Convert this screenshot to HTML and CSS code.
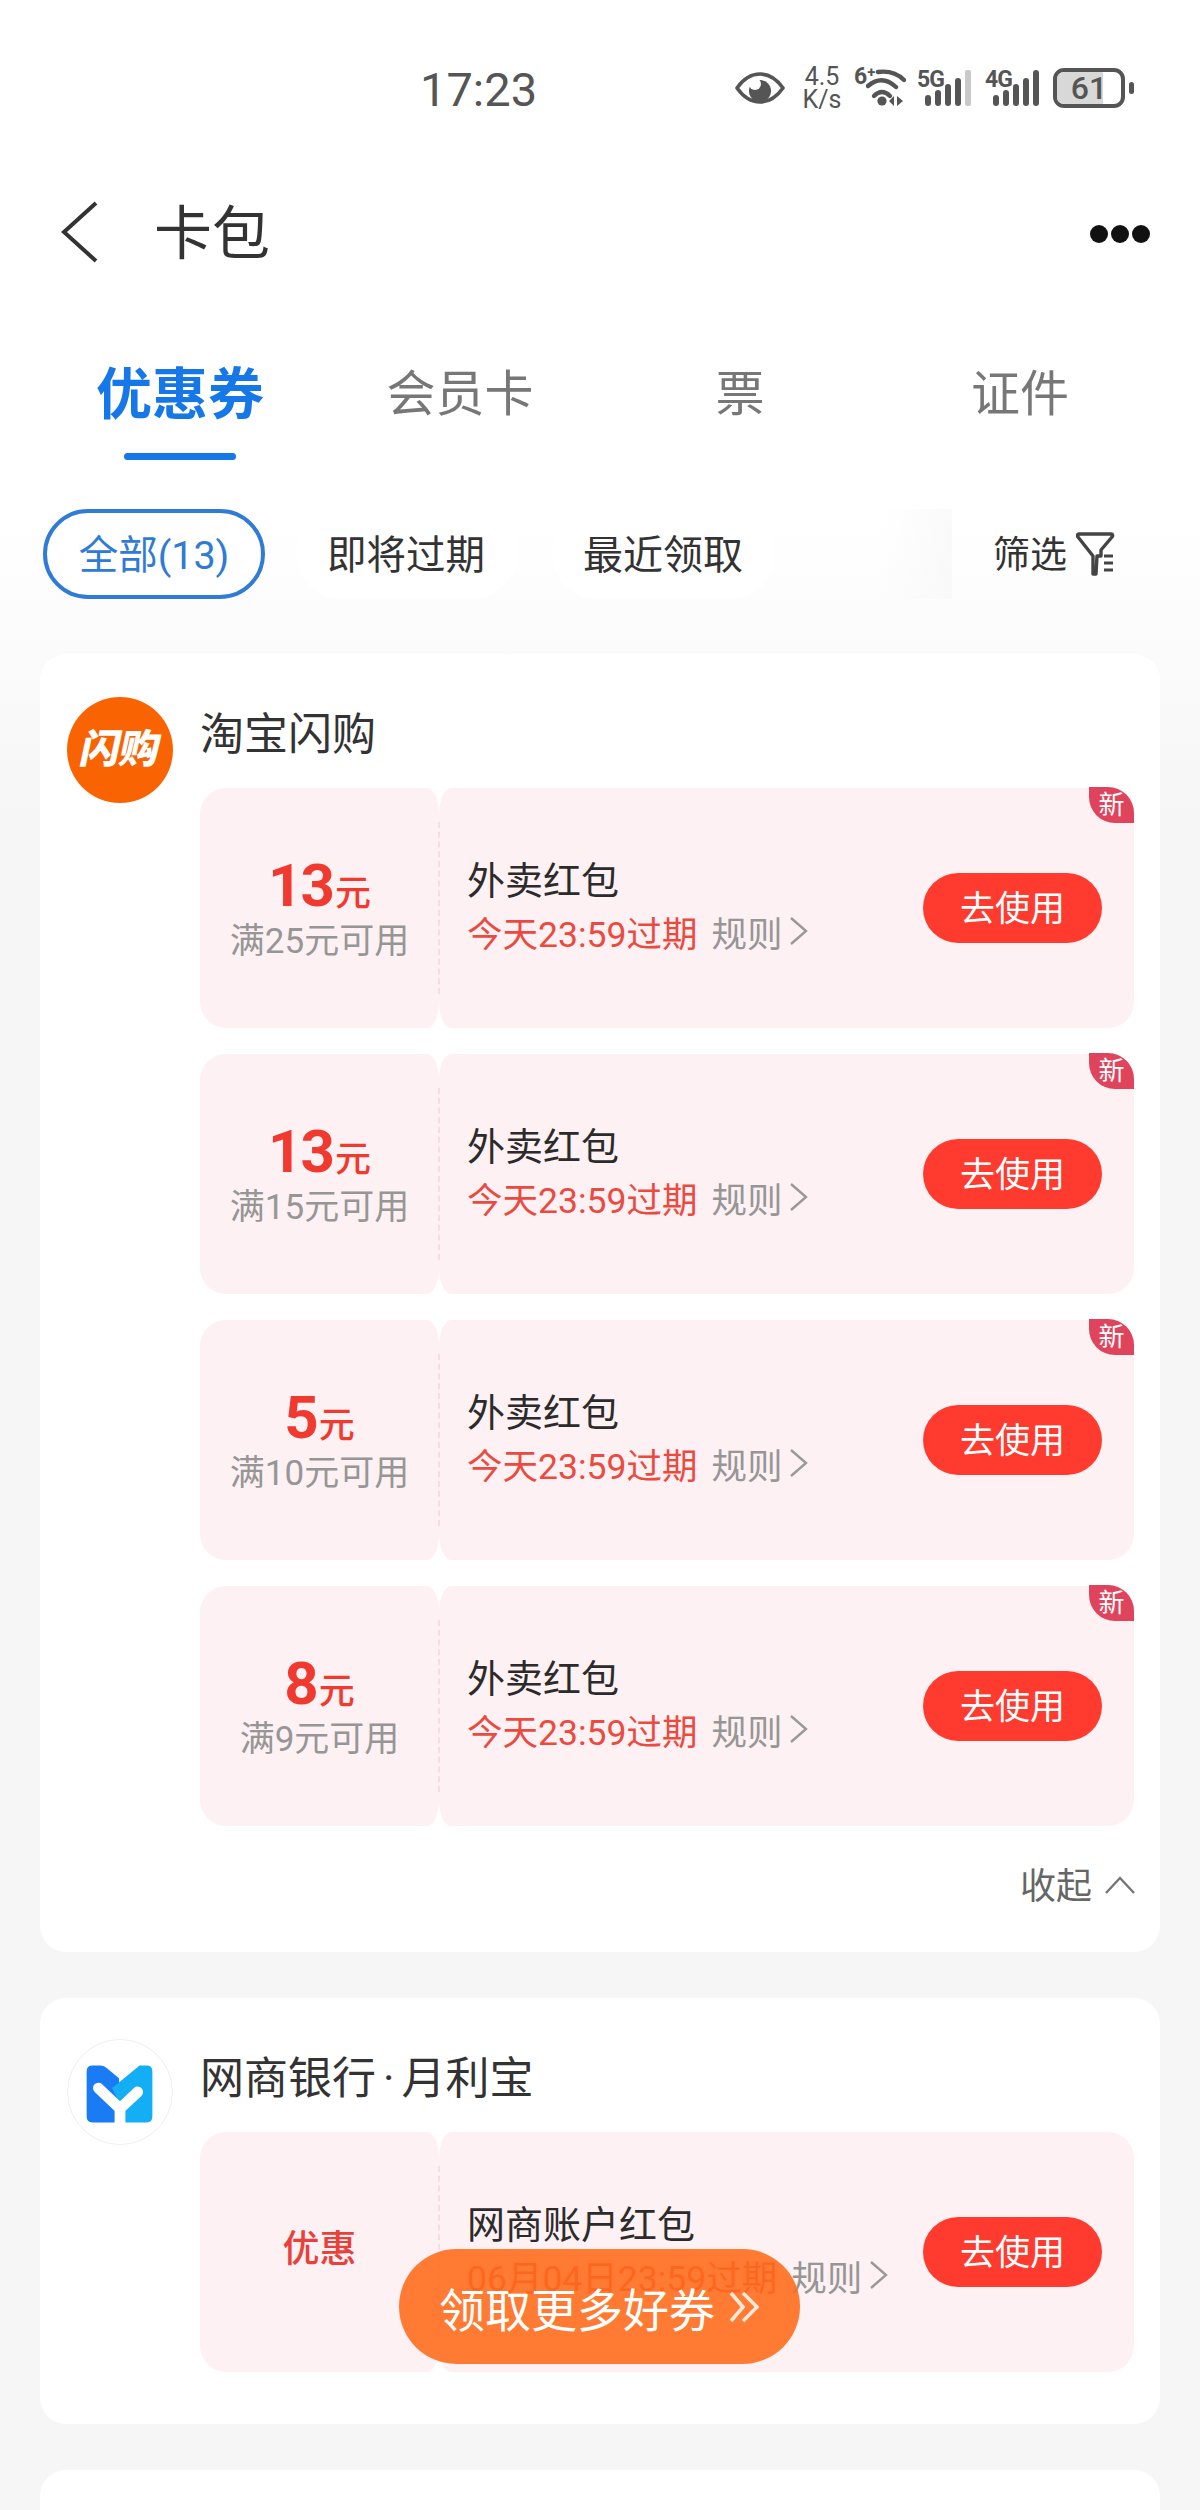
FILE: index.html
```html
<!DOCTYPE html>
<html lang="zh-CN">
<head>
  <meta charset="UTF-8">
  <meta name="viewport" content="width=device-width, initial-scale=1.0">
  <title>卡包</title>
  <link rel="stylesheet" href="styles.css">
</head>
<body>
  <div class="page">
    <div class="status-bar">
      <span class="status-time">17:23</span>
      <div class="status-icons">
        <svg class="icon-eye" viewBox="0 0 50 32"><path d="M2 16C9 6 17 2 25 2s16 4 23 14c-7 10-15 14-23 14S9 26 2 16z" fill="none" stroke="#555" stroke-width="3.6" stroke-linejoin="round"/><circle cx="25" cy="19" r="11" fill="#555"/><circle cx="20" cy="12" r="6" fill="#fff"/></svg>
        <div class="net-speed"><span>4.5</span><span>K/s</span></div>
        <div class="wifi">
          <span class="wifi-gen">6<sup>+</sup></span>
          <svg class="icon-wifi" viewBox="0 0 40 38"><g fill="none" stroke="#555" stroke-width="4.4" stroke-linecap="round"><path d="M12 3Q28 1 38 11"/><path d="M2 17Q16 5 30 18"/><path d="M8 27Q16 19 24 27"/></g><circle cx="16" cy="32" r="4.6" fill="#555"/><path d="M23 32l5-5v10zM31 27l6 5-6 5z" fill="#555"/></svg>
        </div>
        <div class="signal">
          <span class="signal-gen">5G</span>
          <svg class="icon-bars" viewBox="0 0 46 36"><rect x="0" y="25" width="6" height="11" rx="3" fill="#555"/><rect x="10" y="20" width="6" height="16" rx="3" fill="#555"/><rect x="20" y="14" width="6" height="22" rx="3" fill="#555"/><rect x="30" y="8" width="6" height="28" rx="3" fill="#555"/><rect x="40" y="0" width="6" height="36" rx="2" fill="#c9c9c9"/></svg>
        </div>
        <div class="signal">
          <span class="signal-gen">4G</span>
          <svg class="icon-bars" viewBox="0 0 46 36"><rect x="0" y="25" width="6" height="11" rx="3" fill="#555"/><rect x="10" y="20" width="6" height="16" rx="3" fill="#555"/><rect x="20" y="14" width="6" height="22" rx="3" fill="#555"/><rect x="30" y="8" width="6" height="28" rx="3" fill="#555"/><rect x="40" y="0" width="6" height="36" rx="3" fill="#555"/></svg>
        </div>
        <div class="battery">
          <div class="battery-body"><span class="battery-fill"></span><span class="battery-num">61</span></div>
          <span class="battery-nub"></span>
        </div>
      </div>
    </div>

    <header class="nav">
      <svg class="icon-back" viewBox="0 0 38 62"><path d="M36 2L4 31l32 29" fill="none" stroke="#333" stroke-width="4"/></svg>
      <h1 class="nav-title">卡包</h1>
      <div class="nav-more"><span></span><span></span><span></span></div>
    </header>

    <div class="tabs">
      <div class="tab tab-active"><span class="tab-label">优惠券</span><span class="tab-line"></span></div>
      <div class="tab"><span class="tab-label">会员卡</span></div>
      <div class="tab"><span class="tab-label">票</span></div>
      <div class="tab"><span class="tab-label">证件</span></div>
    </div>

    <div class="chips">
      <span class="chip chip-active">全部(13)</span>
      <span class="chip">即将过期</span>
      <span class="chip chip-recent">最近领取</span>
      <div class="filter">
        <span class="filter-fade"></span>
        <span class="filter-label">筛选</span>
        <svg class="icon-filter" viewBox="0 0 40 44"><path d="M3 2h32c2 0 2 2 1 3L25 18v6H21l-1 18-3 0V24L2 5C1 4 1 2 3 2z" fill="none" stroke="#444" stroke-width="3.4" stroke-linejoin="round"/><path d="M28 24h9M28 31h9M28 38h9" stroke="#444" stroke-width="3"/></svg>
      </div>
    </div>

    <section class="card">
      <div class="logo logo-shangou"><span>闪购</span></div>
      <div class="card-body has-fold">
        <div class="card-title">淘宝闪购</div>
        <div class="coupon-list">
          <div class="coupon">
            <div class="coupon-left">
              <div class="amount">13<small>元</small></div>
              <div class="limit">满25元可用</div>
            </div>
            <div class="coupon-right">
              <div class="coupon-info">
                <div class="coupon-name">外卖红包</div>
                <div class="coupon-meta"><span class="expire">今天23:59过期</span><span class="rule">规则</span><svg class="icon-chevron" viewBox="0 0 20 30"><path d="M2 2l15 13L2 28" fill="none" stroke="#999" stroke-width="2.4"/></svg></div>
              </div>
              <button class="use-btn"><span>去使用</span></button>
              <span class="badge-new">新</span>
            </div>
          </div>
          <div class="coupon">
            <div class="coupon-left">
              <div class="amount">13<small>元</small></div>
              <div class="limit">满15元可用</div>
            </div>
            <div class="coupon-right">
              <div class="coupon-info">
                <div class="coupon-name">外卖红包</div>
                <div class="coupon-meta"><span class="expire">今天23:59过期</span><span class="rule">规则</span><svg class="icon-chevron" viewBox="0 0 20 30"><path d="M2 2l15 13L2 28" fill="none" stroke="#999" stroke-width="2.4"/></svg></div>
              </div>
              <button class="use-btn"><span>去使用</span></button>
              <span class="badge-new">新</span>
            </div>
          </div>
          <div class="coupon">
            <div class="coupon-left">
              <div class="amount">5<small>元</small></div>
              <div class="limit">满10元可用</div>
            </div>
            <div class="coupon-right">
              <div class="coupon-info">
                <div class="coupon-name">外卖红包</div>
                <div class="coupon-meta"><span class="expire">今天23:59过期</span><span class="rule">规则</span><svg class="icon-chevron" viewBox="0 0 20 30"><path d="M2 2l15 13L2 28" fill="none" stroke="#999" stroke-width="2.4"/></svg></div>
              </div>
              <button class="use-btn"><span>去使用</span></button>
              <span class="badge-new">新</span>
            </div>
          </div>
          <div class="coupon">
            <div class="coupon-left">
              <div class="amount">8<small>元</small></div>
              <div class="limit">满9元可用</div>
            </div>
            <div class="coupon-right">
              <div class="coupon-info">
                <div class="coupon-name">外卖红包</div>
                <div class="coupon-meta"><span class="expire">今天23:59过期</span><span class="rule">规则</span><svg class="icon-chevron" viewBox="0 0 20 30"><path d="M2 2l15 13L2 28" fill="none" stroke="#999" stroke-width="2.4"/></svg></div>
              </div>
              <button class="use-btn"><span>去使用</span></button>
              <span class="badge-new">新</span>
            </div>
          </div>
        </div>
        <div class="fold">
          <span class="fold-label">收起</span>
          <svg class="icon-up" viewBox="0 0 32 20"><path d="M2 18L16 3l14 15" fill="none" stroke="#777" stroke-width="2.4"/></svg>
        </div>
      </div>
    </section>

    <section class="card">
      <div class="logo logo-mybank">
        <svg viewBox="0 0 106 106"><path d="M19 32q0-6 6-6h8q4 0 7 3l12 10 1 45H25q-6 0-6-6z" fill="#1a7cf5"/><path d="M73 26h7q6 0 6 6v46q0 6-6 6H53V66l-8-17z" fill="#14aef5"/><path d="M31 49l22 21 18-17M53 68v18" fill="none" stroke="#fff" stroke-width="11" stroke-linecap="round" stroke-linejoin="round"/></svg>
      </div>
      <div class="card-body">
        <div class="card-title">网商银行<span class="title-dot">·</span>月利宝</div>
        <div class="coupon-list">
          <div class="coupon">
            <div class="coupon-left">
              <div class="promo">优惠</div>
            </div>
            <div class="coupon-right">
              <div class="coupon-info">
                <div class="coupon-name">网商账户红包</div>
                <div class="coupon-meta"><span class="expire">06月04日23:59过期</span><span class="rule">规则</span><svg class="icon-chevron" viewBox="0 0 20 30"><path d="M2 2l15 13L2 28" fill="none" stroke="#999" stroke-width="2.4"/></svg></div>
              </div>
              <button class="use-btn"><span>去使用</span></button>
            </div>
          </div>
        </div>
      </div>
    </section>

    <section class="card card-cut"></section>

    <div class="float-btn">
      <span>领取更多好券</span>
      <svg class="icon-double" viewBox="0 0 30 32"><path d="M2 2l12 14L2 30M14 2l14 14-14 14" fill="none" stroke="#ffe9d8" stroke-width="3.6"/></svg>
    </div>
  </div>
</body>
</html>
```
FILE: styles.css
```css
:root {
  --blue: #1677e8;
  --red: #f0392f;
  --coupon-bg: #fef1f3;
  --text-dark: #2b2b2b;
  --text-gray: #969696;
}

* {
  box-sizing: border-box;
  margin: 0;
  padding: 0;
}

body {
  font-family: Roboto, "Noto Sans CJK SC", sans-serif;
  background: #f6f6f6;
  color: var(--text-dark);
}

.page {
  position: relative;
  height: 2510px;
  overflow: hidden;
  background: linear-gradient(#fff 0, #fff 520px, #f6f6f6 820px);
}

/* status bar */
.status-bar {
  height: 176px;
  display: flex;
  align-items: center;
  padding: 0 66px 0 420px;
  color: #555;
}

.status-time {
  font-size: 47px;
  line-height: 60px;
  padding-top: 3px;
  width: 317px;
}

.status-icons {
  display: flex;
  align-items: center;
}

.icon-eye {
  width: 50px;
  height: 32px;
  margin-right: 17px;
}

.net-speed {
  display: flex;
  flex-direction: column;
  align-items: center;
  width: 40px;
  font-size: 25px;
  line-height: 23px;
  margin-right: 11px;
}

.wifi {
  position: relative;
  width: 55px;
  height: 40px;
  margin-right: 9px;
}

.wifi-gen {
  position: absolute;
  left: 1px;
  top: -3px;
  font-size: 23px;
  font-weight: 700;
  line-height: 24px;
}

.wifi-gen sup {
  font-size: 15px;
  vertical-align: 7px;
  line-height: 0;
}

.icon-wifi {
  position: absolute;
  left: 13px;
  top: 1px;
  width: 40px;
  height: 38px;
}

.signal {
  position: relative;
  width: 54px;
  height: 36px;
  margin-right: 14px;
}

.signal-gen {
  position: absolute;
  left: 0;
  top: -2px;
  font-size: 23px;
  font-weight: 700;
  line-height: 24px;
  letter-spacing: -1px;
}

.icon-bars {
  position: absolute;
  left: 8px;
  top: 0;
  width: 46px;
  height: 36px;
}

.battery {
  display: flex;
  align-items: center;
  gap: 4px;
}

.battery-body {
  position: relative;
  width: 72px;
  height: 40px;
  border: 4px solid #555;
  border-radius: 11px;
  overflow: hidden;
  text-align: center;
}

.battery-fill {
  position: absolute;
  left: 0;
  top: 0;
  bottom: 0;
  width: 46px;
  background: #d8d8d8;
}

.battery-num {
  position: relative;
  font-size: 32px;
  line-height: 32px;
  font-weight: 500;
  color: #555;
}

.battery-nub {
  width: 5px;
  height: 12px;
  border-radius: 3px;
  background: #555;
}

/* nav */
.nav {
  height: 112px;
  display: flex;
  align-items: center;
  padding: 0 50px 0 60px;
}

.icon-back {
  width: 38px;
  height: 62px;
  margin-right: 56px;
}

.nav-title {
  font-size: 58px;
  line-height: 70px;
  font-weight: 400;
  color: #333;
  flex: 1;
  padding-top: 4px;
}

.nav-more {
  display: flex;
  gap: 3px;
  padding-top: 3px;
}

.nav-more span {
  width: 18px;
  height: 18px;
  border-radius: 50%;
  background: #111;
}

/* tabs */
.tabs {
  height: 172px;
  display: grid;
  grid-template-columns: repeat(4, 280px);
  padding: 0 40px;
}

.tab {
  display: flex;
  flex-direction: column;
  align-items: center;
  padding-top: 72px;
}

.tab-label {
  height: 64px;
  padding-top: 3px;
  font-size: 49px;
  line-height: 64px;
  color: #777;
}

.tab-active .tab-label {
  font-size: 56px;
  font-weight: 700;
  color: var(--blue);
}

.tab-line {
  width: 112px;
  height: 7px;
  margin-top: 29px;
  border-radius: 4px;
  background: var(--blue);
}

/* filter chips */
.chips {
  position: relative;
  height: 90px;
  margin-top: 49px;
  padding-left: 43px;
  display: flex;
  gap: 31px;
}

.chip {
  display: flex;
  align-items: center;
  padding: 0 32px 5px 31px;
  border-radius: 45px;
  background: #fff;
  font-size: 39.5px;
  color: #333;
}

.chip-active {
  width: 222px;
  padding: 0 0 5px;
  justify-content: center;
  border: 4px solid #2f7bd6;
  color: #2f7bd6;
}

.chip-recent {
  margin-left: 4px;
  font-size: 40px;
}

.filter {
  position: absolute;
  left: 880px;
  right: 0;
  top: 0;
  bottom: 0;
  display: flex;
  align-items: center;
}

.filter-fade {
  width: 72px;
  height: 100%;
  margin-right: 41px;
  background: linear-gradient(90deg, rgba(245, 245, 245, 0), rgba(245, 245, 245, .5));
}

.filter-label {
  font-size: 37px;
  color: #333;
  margin-right: 9px;
  padding-bottom: 4px;
}

.icon-filter {
  width: 40px;
  height: 44px;
}

/* cards */
.card {
  display: flex;
  gap: 27px;
  margin: 55px 40px 0;
  padding: 43px 26px 0 27px;
  border-radius: 26px;
  background: #fff;
}

.card + .card {
  margin-top: 46px;
}

.card-cut {
  height: 200px;
}

.logo {
  flex: none;
  width: 106px;
  height: 106px;
  border-radius: 50%;
}

.logo-shangou {
  display: flex;
  align-items: center;
  justify-content: center;
  background: #f96302;
  color: #fff;
  font-size: 40px;
  line-height: 50px;
  font-weight: 900;
  letter-spacing: -1px;
}

.logo-shangou span {
  transform: skewX(-12deg);
}

.logo-mybank {
  margin-top: -2px;
  border: 1px solid #eee;
  background: #fff;
}

.logo-mybank svg {
  display: block;
  width: 104px;
  height: 104px;
}

.card-body {
  flex: 1;
  padding: 6px 0 52px;
}

.card-body.has-fold {
  padding-bottom: 38px;
}

.card-title {
  height: 60px;
  margin-bottom: 25px;
  font-size: 44px;
  line-height: 64px;
  color: #333;
}

.title-dot {
  margin: 0 7px;
}

.coupon-list {
  display: flex;
  flex-direction: column;
  gap: 26px;
}

.coupon {
  display: flex;
  height: 240px;
}

.coupon-left {
  flex: none;
  width: 239px;
  padding-top: 14px;
  display: flex;
  flex-direction: column;
  align-items: center;
  justify-content: center;
  border-radius: 26px 12px 12px 26px / 26px;
  background: var(--coupon-bg);
}

.amount {
  font-size: 60px;
  line-height: 46px;
  font-weight: 700;
  letter-spacing: -2px;
  color: var(--red);
}

.amount small {
  margin-left: 2px;
  font-size: 36px;
  font-weight: 500;
  letter-spacing: 0;
}

.limit {
  font-size: 35px;
  line-height: 50px;
  color: var(--text-gray);
}

.promo {
  margin-bottom: 26px;
  font-size: 37px;
  font-weight: 500;
  color: #e8403a;
}

.coupon-right {
  position: relative;
  flex: 1;
  padding: 0 32px 0 28px;
  display: flex;
  align-items: center;
  justify-content: space-between;
  border-radius: 12px 26px 26px 12px / 26px;
  background: var(--coupon-bg);
}

.coupon-right::before {
  content: "";
  position: absolute;
  left: -1px;
  top: 34px;
  bottom: 34px;
  border-left: 2px dashed #f6dde3;
}

.coupon-info {
  padding-bottom: 7px;
}

.coupon-name {
  height: 53px;
  font-size: 38px;
  line-height: 49px;
  color: var(--text-dark);
}

.coupon-meta {
  display: flex;
  align-items: center;
  height: 43px;
  font-size: 35.5px;
}

.expire {
  color: #ea4a40;
}

.rule {
  margin-left: 14px;
  color: var(--text-gray);
}

.icon-chevron {
  width: 20px;
  height: 30px;
  margin-left: 7px;
}

.use-btn {
  width: 179px;
  height: 70px;
  padding-bottom: 5px;
  border: none;
  border-radius: 35px;
  background: #ff3b30;
  color: #fff;
  font-family: inherit;
  font-size: 35px;
}

.badge-new {
  position: absolute;
  right: 0;
  top: -1px;
  width: 45px;
  height: 36px;
  display: flex;
  align-items: center;
  justify-content: center;
  border-radius: 0 26px 0 26px;
  background: #e0445c;
  color: #fff;
  font-size: 26px;
  line-height: 36px;
}

.fold {
  height: 56px;
  margin-top: 32px;
  margin-right: -2px;
  display: flex;
  align-items: center;
  justify-content: flex-end;
  gap: 12px;
  font-size: 36px;
  color: #666;
}

.fold-label {
  padding-bottom: 6px;
}

.icon-up {
  width: 32px;
  height: 20px;
  margin-bottom: 2px;
}

/* floating button */
.float-btn {
  position: absolute;
  left: 399px;
  top: 2249px;
  width: 401px;
  height: 115px;
  padding-left: 40px;
  display: flex;
  align-items: center;
  gap: 14px;
  border-radius: 58px;
  background: rgba(255, 106, 25, .88);
  color: #fff;
  font-size: 46px;
}

.icon-double {
  width: 30px;
  height: 32px;
}
```
